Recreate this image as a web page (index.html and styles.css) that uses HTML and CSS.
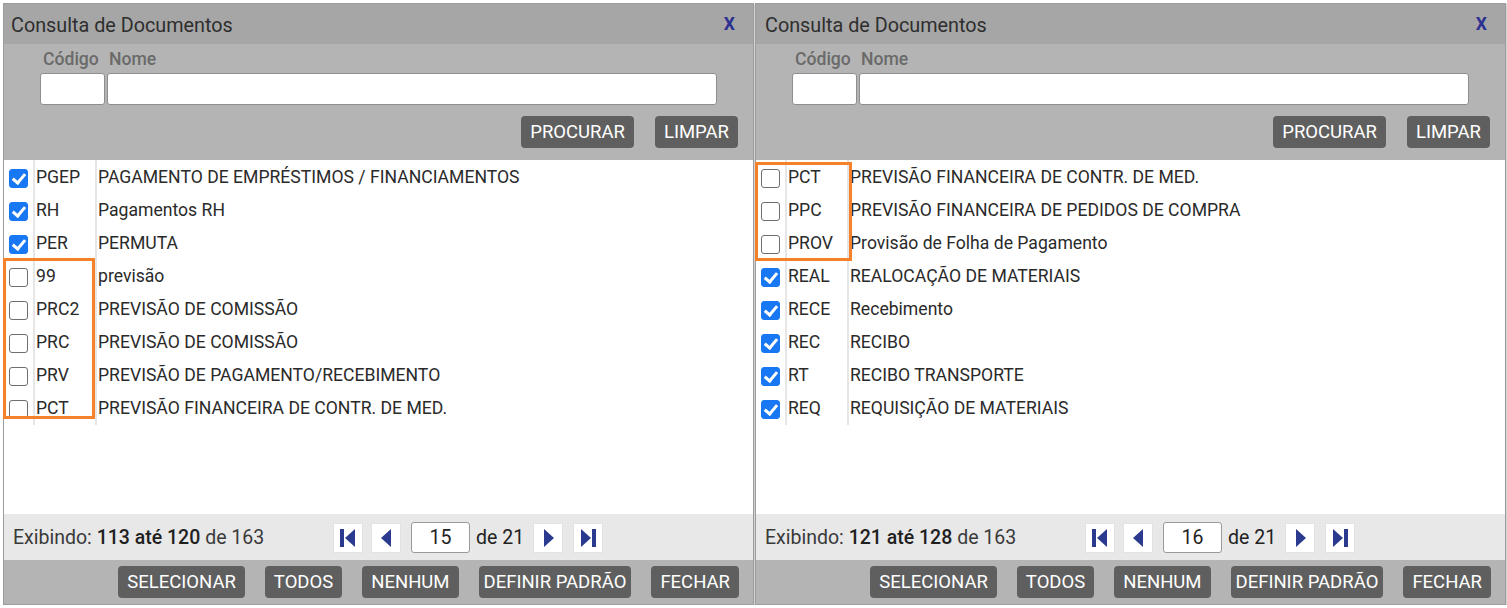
FILE: index.html
```html
<!DOCTYPE html>
<html lang="pt-BR">
<head>
<meta charset="utf-8">
<title>Consulta de Documentos</title>
<link rel="stylesheet" href="styles.css">
</head>
<body>
<div class="screen">

  <section class="dialog">
    <header class="dlg-head">
      <h1 class="dlg-title">Consulta de Documentos</h1>
      <span class="dlg-close">X</span>
    </header>
    <div class="search">
      <div class="fields">
        <label class="lbl lbl-code">Código</label>
        <label class="lbl lbl-name">Nome</label>
        <input class="inp" type="text">
        <input class="inp" type="text">
      </div>
      <div class="search-actions">
        <button class="btn">PROCURAR</button>
        <button class="btn">LIMPAR</button>
      </div>
    </div>
    <div class="list">
      <div class="row"><div class="c-chk"><input type="checkbox" class="cb" checked></div><div class="c-code">PGEP</div><div class="c-desc">PAGAMENTO DE EMPRÉSTIMOS / FINANCIAMENTOS</div></div>
      <div class="row"><div class="c-chk"><input type="checkbox" class="cb" checked></div><div class="c-code">RH</div><div class="c-desc">Pagamentos RH</div></div>
      <div class="row"><div class="c-chk"><input type="checkbox" class="cb" checked></div><div class="c-code">PER</div><div class="c-desc">PERMUTA</div></div>
      <div class="row"><div class="c-chk"><input type="checkbox" class="cb"></div><div class="c-code">99</div><div class="c-desc">previsão</div></div>
      <div class="row"><div class="c-chk"><input type="checkbox" class="cb"></div><div class="c-code">PRC2</div><div class="c-desc">PREVISÃO DE COMISSÃO</div></div>
      <div class="row"><div class="c-chk"><input type="checkbox" class="cb"></div><div class="c-code">PRC</div><div class="c-desc">PREVISÃO DE COMISSÃO</div></div>
      <div class="row"><div class="c-chk"><input type="checkbox" class="cb"></div><div class="c-code">PRV</div><div class="c-desc">PREVISÃO DE PAGAMENTO/RECEBIMENTO</div></div>
      <div class="row"><div class="c-chk"><input type="checkbox" class="cb"></div><div class="c-code">PCT</div><div class="c-desc">PREVISÃO FINANCEIRA DE CONTR. DE MED.</div></div>
      <div class="mark mark-left"></div>
    </div>
    <div class="pager">
      <div class="pager-info">Exibindo: <b>113 até 120</b> de 163</div>
      <div class="pager-nav">
        <button class="pbtn" aria-label="Primeira"><svg width="16" height="18" viewBox="0 0 16 18"><rect x="0" y="0" width="4" height="18" fill="#2b3a8e"/><path d="M15 0 L15 18 L5 9 Z" fill="#2b3a8e"/></svg></button>
        <button class="pbtn" aria-label="Anterior"><svg width="11" height="18" viewBox="0 0 11 18"><path d="M10 0 L10 18 L0 9 Z" fill="#2b3a8e"/></svg></button>
        <input class="page-inp" type="text" value="15">
        <span class="page-of">de 21</span>
        <button class="pbtn pbtn-next" aria-label="Próxima"><svg width="11" height="18" viewBox="0 0 11 18"><path d="M1 0 L1 18 L11 9 Z" fill="#2b3a8e"/></svg></button>
        <button class="pbtn" aria-label="Última"><svg width="16" height="18" viewBox="0 0 16 18"><path d="M1 0 L1 18 L11 9 Z" fill="#2b3a8e"/><rect x="12" y="0" width="4" height="18" fill="#2b3a8e"/></svg></button>
      </div>
    </div>
    <footer class="dlg-foot">
      <button class="btn">SELECIONAR</button>
      <button class="btn">TODOS</button>
      <button class="btn">NENHUM</button>
      <button class="btn btn-tight">DEFINIR PADRÃO</button>
      <button class="btn">FECHAR</button>
    </footer>
  </section>

  <section class="dialog dialog-right">
    <header class="dlg-head">
      <h1 class="dlg-title">Consulta de Documentos</h1>
      <span class="dlg-close">X</span>
    </header>
    <div class="search">
      <div class="fields">
        <label class="lbl lbl-code">Código</label>
        <label class="lbl lbl-name">Nome</label>
        <input class="inp" type="text">
        <input class="inp" type="text">
      </div>
      <div class="search-actions">
        <button class="btn">PROCURAR</button>
        <button class="btn">LIMPAR</button>
      </div>
    </div>
    <div class="list">
      <div class="row"><div class="c-chk"><input type="checkbox" class="cb"></div><div class="c-code">PCT</div><div class="c-desc">PREVISÃO FINANCEIRA DE CONTR. DE MED.</div></div>
      <div class="row"><div class="c-chk"><input type="checkbox" class="cb"></div><div class="c-code">PPC</div><div class="c-desc">PREVISÃO FINANCEIRA DE PEDIDOS DE COMPRA</div></div>
      <div class="row"><div class="c-chk"><input type="checkbox" class="cb"></div><div class="c-code">PROV</div><div class="c-desc">Provisão de Folha de Pagamento</div></div>
      <div class="row"><div class="c-chk"><input type="checkbox" class="cb" checked></div><div class="c-code">REAL</div><div class="c-desc">REALOCAÇÃO DE MATERIAIS</div></div>
      <div class="row"><div class="c-chk"><input type="checkbox" class="cb" checked></div><div class="c-code">RECE</div><div class="c-desc">Recebimento</div></div>
      <div class="row"><div class="c-chk"><input type="checkbox" class="cb" checked></div><div class="c-code">REC</div><div class="c-desc">RECIBO</div></div>
      <div class="row"><div class="c-chk"><input type="checkbox" class="cb" checked></div><div class="c-code">RT</div><div class="c-desc">RECIBO TRANSPORTE</div></div>
      <div class="row"><div class="c-chk"><input type="checkbox" class="cb" checked></div><div class="c-code">REQ</div><div class="c-desc">REQUISIÇÃO DE MATERIAIS</div></div>
      <div class="mark mark-right"></div>
    </div>
    <div class="pager">
      <div class="pager-info">Exibindo: <b>121 até 128</b> de 163</div>
      <div class="pager-nav">
        <button class="pbtn" aria-label="Primeira"><svg width="16" height="18" viewBox="0 0 16 18"><rect x="0" y="0" width="4" height="18" fill="#2b3a8e"/><path d="M15 0 L15 18 L5 9 Z" fill="#2b3a8e"/></svg></button>
        <button class="pbtn" aria-label="Anterior"><svg width="11" height="18" viewBox="0 0 11 18"><path d="M10 0 L10 18 L0 9 Z" fill="#2b3a8e"/></svg></button>
        <input class="page-inp" type="text" value="16">
        <span class="page-of">de 21</span>
        <button class="pbtn pbtn-next" aria-label="Próxima"><svg width="11" height="18" viewBox="0 0 11 18"><path d="M1 0 L1 18 L11 9 Z" fill="#2b3a8e"/></svg></button>
        <button class="pbtn" aria-label="Última"><svg width="16" height="18" viewBox="0 0 16 18"><path d="M1 0 L1 18 L11 9 Z" fill="#2b3a8e"/><rect x="12" y="0" width="4" height="18" fill="#2b3a8e"/></svg></button>
      </div>
    </div>
    <footer class="dlg-foot">
      <button class="btn">SELECIONAR</button>
      <button class="btn">TODOS</button>
      <button class="btn">NENHUM</button>
      <button class="btn btn-tight">DEFINIR PADRÃO</button>
      <button class="btn">FECHAR</button>
    </footer>
  </section>

</div>
</body>
</html>
```

FILE: styles.css
```css
* { box-sizing: border-box; }

html, body {
  margin: 0;
  padding: 0;
  background: #ffffff;
  font-family: Roboto, "Liberation Sans", Arial, sans-serif;
  color: #2a2a2a;
}

.screen {
  display: flex;
  gap: 1px;
  padding: 3px 0 0 3px;
}

.dialog {
  width: 751px;
  height: 602px;
  border: 1px solid #9c9c9c;
  box-shadow: 1px 1px 0 #d4d4d4;
  display: flex;
  flex-direction: column;
  background: #fff;
}

.dlg-head {
  height: 40px;
  flex: none;
  background: #a6a6a6;
  display: flex;
  align-items: center;
  justify-content: space-between;
  padding: 3px 18px 0 7px;
}
.dialog-right .dlg-head { padding-left: 9px; }

.dlg-title {
  margin: 0;
  font-size: 19.8px;
  font-weight: 400;
  line-height: 37px;
  color: #2e2e2e;
}

.dlg-close {
  font-size: 17.6px;
  font-weight: 700;
  color: #2e3192;
  line-height: 1;
  padding-bottom: 1px;
}

.search {
  height: 116px;
  flex: none;
  background: #b4b4b4;
  padding: 5px 15px 0 36px;
}

.fields {
  display: grid;
  grid-template-columns: 65px 610px;
  grid-template-rows: 20px 32px;
  column-gap: 2px;
  row-gap: 4px;
}

.lbl {
  font-size: 17.6px;
  font-weight: 500;
  color: #6a6a6a;
  line-height: 20px;
}
.lbl-code { padding-left: 3px; }
.lbl-name { padding-left: 2px; }

.inp {
  height: 32px;
  border: 1px solid #8e8e8e;
  border-radius: 3px;
  background: #fff;
  margin: 0;
  padding: 0 4px;
  font: inherit;
}

.search-actions {
  display: flex;
  justify-content: flex-end;
  gap: 21px;
  margin-top: 11px;
}

.btn {
  height: 32px;
  border: none;
  border-radius: 4px;
  background: #5f5f5f;
  color: #ffffff;
  font-family: Roboto, "Liberation Sans", Arial, sans-serif;
  font-size: 18.5px;
  font-weight: 400;
  padding: 1px 9px 0;
  margin: 0;
  line-height: 31px;
}
.btn-tight { padding: 1px 5px 0; }

.list {
  flex: 1;
  position: relative;
  background: #fff;
}

.row {
  display: grid;
  grid-template-columns: 31px 62px 1fr;
  height: 33px;
  align-items: stretch;
  font-size: 17.6px;
  color: #2a2a2a;
}

.c-chk, .c-code {
  border-right: 2px solid #e6e6e6;
}
.c-chk {
  display: flex;
  align-items: center;
  padding-left: 5px;
  padding-top: 2px;
}
.c-code, .c-desc {
  line-height: 33px;
  padding-top: 1px;
  white-space: nowrap;
}
.c-code { padding-left: 1px; }
.c-desc { padding-left: 1px; }

.cb {
  appearance: none;
  -webkit-appearance: none;
  width: 19px;
  height: 19px;
  margin: 0;
  border: 1.5px solid #6e6e6e;
  border-radius: 3px;
  background: #fff;
  position: relative;
}
.cb:checked {
  background: #1877f2;
  border-color: #1877f2;
}
.cb:checked::after {
  content: "";
  position: absolute;
  left: 5px;
  top: 1px;
  width: 5px;
  height: 10px;
  border-right: 3px solid #fff;
  border-bottom: 3px solid #fff;
  transform: rotate(40deg);
}

.mark {
  position: absolute;
  border: 3px solid #f5822b;
  pointer-events: none;
}
.mark-left {
  left: -1px;
  top: 98px;
  width: 92px;
  height: 161px;
}
.mark-right {
  left: -1px;
  top: 2px;
  width: 97px;
  height: 99px;
}

.pager {
  height: 46px;
  flex: none;
  background: #e8e8e8;
  display: grid;
  grid-template-columns: 320px auto;
  align-items: center;
  padding: 1px 0 0 9px;
}

.pager-info {
  font-size: 19.5px;
  color: #3a3a3a;
  white-space: nowrap;
}
.pager-info b {
  font-weight: 500;
  color: #1f1f1f;
}

.pager-nav {
  display: flex;
  align-items: center;
}

.pbtn {
  width: 30px;
  height: 30px;
  padding: 0;
  margin: 0 8px 0 0;
  border: 1px solid #e2e2e2;
  background: #fff;
  display: flex;
  align-items: center;
  justify-content: center;
}
.pbtn + .page-inp { margin-left: 2px; }
.pbtn-next { margin-right: 10px; }

.page-inp {
  width: 59px;
  height: 31px;
  border: 1px solid #9a9a9a;
  border-radius: 3px;
  background: #fff;
  text-align: center;
  font-family: Roboto, "Liberation Sans", Arial, sans-serif;
  font-size: 19.5px;
  color: #222;
  padding: 0;
  margin: 0;
}

.page-of {
  font-size: 19.5px;
  color: #222;
  margin: 0 9px 0 6px;
  white-space: nowrap;
}

.dlg-foot {
  height: 44px;
  flex: none;
  background: #b4b4b4;
  display: flex;
  justify-content: flex-end;
  align-items: flex-start;
  gap: 20px;
  padding: 6px 14px 0 0;
}
```
